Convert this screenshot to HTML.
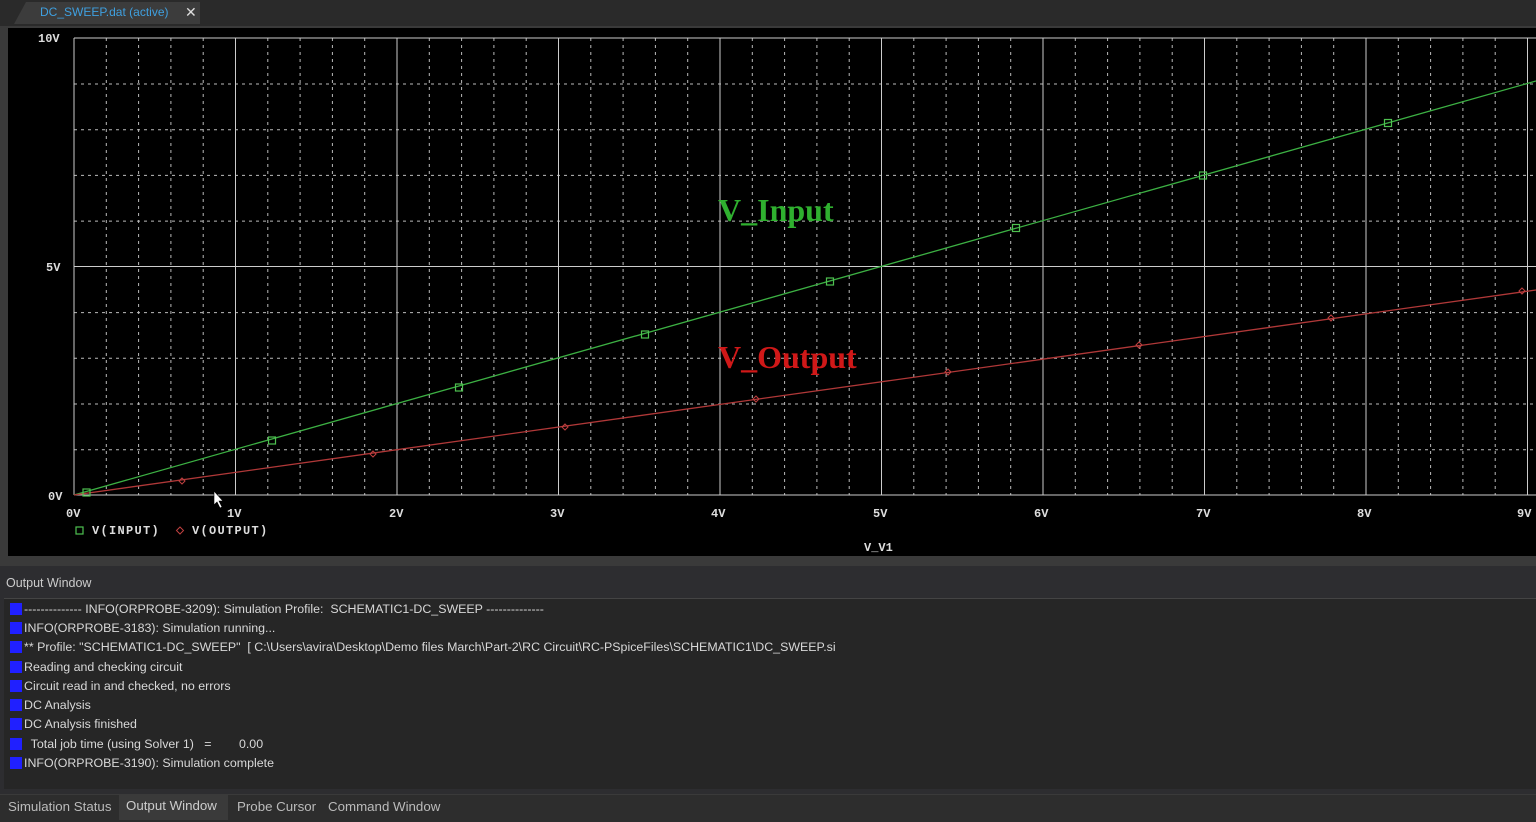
<!DOCTYPE html>
<html><head><style>
body{margin:0;width:1536px;height:821px;overflow:hidden;background:#2d2d30;font-family:"Liberation Sans",sans-serif;position:relative}
.tabbar{position:absolute;left:0;top:0;width:1536px;height:26px;background:#2a2a2a}
.tab{position:absolute;left:14px;top:2px;width:186px;height:22px;background:#3c3c3c;clip-path:polygon(12px 0,100% 0,100% 100%,0 100%)}
.tab span{position:absolute;left:26px;top:3px;font-size:12px;color:#3fa0e0}
.tab b{position:absolute;left:171px;top:2px;font-size:14px;color:#ddd;font-weight:normal}
.plotwrap{position:absolute;left:0;top:26px;width:1536px;height:540px;background:#3a3a3a}
svg{position:absolute;left:8px;top:28px}
.ow{position:absolute;left:6px;top:576px;font-size:12.5px;color:#ccc}
.list{position:absolute;left:4px;top:598px;width:1532px;height:190px;background:#262626;border-top:1px solid #444}
.row{position:absolute;left:6px;height:19px;font-size:12.4px;color:#d8d8d8;white-space:pre}
.row i{display:inline-block;width:12px;height:12px;background:#2020ff;vertical-align:-2px;margin-right:2px}
.btabs{position:absolute;left:0;top:794px;width:1536px;height:27px;background:#2d2d2d;border-top:1px solid #3a3a3a}
.bt{position:absolute;top:4px;font-size:13.3px;color:#bbb}
</style></head><body>
<div class="tabbar"><div class="tab"><span>DC_SWEEP.dat (active)</span><b>✕</b></div></div>
<div class="plotwrap"></div>
<svg width="1528" height="528" viewBox="8 28 1528 528" xmlns="http://www.w3.org/2000/svg" font-family="Liberation Mono,monospace" font-weight="bold">
<rect x="8" y="28" width="1528" height="528" fill="#000"/>
<g stroke="#bbb" stroke-width="1" stroke-dasharray="3,4">
<line x1="74" y1="84" x2="1536" y2="84"/><line x1="74" y1="129.7" x2="1536" y2="129.7"/><line x1="74" y1="175.4" x2="1536" y2="175.4"/><line x1="74" y1="221.1" x2="1536" y2="221.1"/>
<line x1="74" y1="312.6" x2="1536" y2="312.6"/><line x1="74" y1="358.3" x2="1536" y2="358.3"/><line x1="74" y1="404" x2="1536" y2="404"/><line x1="74" y1="449.7" x2="1536" y2="449.7"/>
</g>
<g id="vm" stroke="#bbb" stroke-width="1" stroke-dasharray="3,4"></g>
<g stroke="#ccc" stroke-width="1">
<line x1="74" y1="38" x2="1536" y2="38"/><line x1="74" y1="266.5" x2="1536" y2="266.5"/><line x1="74" y1="495" x2="1536" y2="495"/>
<line x1="74" y1="38" x2="74" y2="495"/>
<line x1="235.5" y1="38" x2="235.5" y2="495"/><line x1="397" y1="38" x2="397" y2="495"/><line x1="558.5" y1="38" x2="558.5" y2="495"/><line x1="720" y1="38" x2="720" y2="495"/><line x1="881.5" y1="38" x2="881.5" y2="495"/><line x1="1043" y1="38" x2="1043" y2="495"/><line x1="1204.5" y1="38" x2="1204.5" y2="495"/><line x1="1366" y1="38" x2="1366" y2="495"/><line x1="1527.5" y1="38" x2="1527.5" y2="495"/>
</g>
<line x1="74" y1="495" x2="1536" y2="81" stroke="#3cb043" stroke-width="1.3"/>
<line x1="74" y1="495" x2="1536" y2="290" stroke="#b03838" stroke-width="1.3"/>
<g fill="none" stroke="#4ec050" stroke-width="1.2">
<rect x="83" y="489" width="7" height="7"/><rect x="268.5" y="437" width="7" height="7"/><rect x="455.5" y="384" width="7" height="7"/><rect x="641.5" y="331" width="7" height="7"/><rect x="826.5" y="278" width="7" height="7"/><rect x="1012.5" y="224.5" width="7" height="7"/><rect x="1199.5" y="172" width="7" height="7"/><rect x="1384.5" y="119.5" width="7" height="7"/>
</g>
<g fill="none" stroke="#c04040" stroke-width="1">
<path d="M182 478l3 3-3 3-3-3z"/><path d="M373 451l3 3-3 3-3-3z"/><path d="M565 424l3 3-3 3-3-3z"/><path d="M756 396l3 3-3 3-3-3z"/><path d="M948 369l3 3-3 3-3-3z"/><path d="M1139 342l3 3-3 3-3-3z"/><path d="M1331 315l3 3-3 3-3-3z"/><path d="M1522 288l3 3-3 3-3-3z"/>
</g>
<g fill="#ddd" font-size="12">
<text x="38" y="42">10V</text><text x="46" y="271">5V</text><text x="48" y="500">0V</text>
<text x="66" y="517">0V</text><text x="227" y="517">1V</text><text x="389" y="517">2V</text><text x="550" y="517">3V</text><text x="711" y="517">4V</text><text x="873" y="517">5V</text><text x="1034" y="517">6V</text><text x="1196" y="517">7V</text><text x="1357" y="517">8V</text><text x="1517" y="517">9V</text>
<text x="92" y="534" letter-spacing="1.3">V(INPUT)</text><text x="192" y="534" letter-spacing="1.3">V(OUTPUT)</text>
<text x="864" y="551">V_V1</text>
</g>
<rect x="76" y="527" width="7" height="7" fill="none" stroke="#4ec050" stroke-width="1.2"/>
<path d="M180 527l3.5 3.5-3.5 3.5-3.5-3.5z" fill="none" stroke="#c04040"/>
<text x="718" y="221" font-family="Liberation Serif,serif" font-weight="bold" font-size="32" fill="#2fb02f">V_Input</text>
<text x="718" y="368" font-family="Liberation Serif,serif" font-weight="bold" font-size="32" fill="#d01818">V_Output</text>
<path d="M214 491v14l3-3 3 6 2-1-3-6h4z" fill="#fff" stroke="#000" stroke-width="0.6"/>
</svg>
<script>
var g=document.getElementById('vm'),s='';
for(var i=0;i<46;i++){if(i%5==0)continue;var x=74+i*32.3;if(x>1536)break;s+='<line x1="'+x+'" y1="38" x2="'+x+'" y2="495"/>';}
g.innerHTML=s;
</script>
<div class="ow">Output Window</div>
<div class="list">
<div class="row" style="top:3px"><i></i>-------------- INFO(ORPROBE-3209): Simulation Profile:  SCHEMATIC1-DC_SWEEP --------------</div>
<div class="row" style="top:22px"><i></i>INFO(ORPROBE-3183): Simulation running...</div>
<div class="row" style="top:41px"><i></i>** Profile: "SCHEMATIC1-DC_SWEEP"  [ C:\Users\avira\Desktop\Demo files March\Part-2\RC Circuit\RC-PSpiceFiles\SCHEMATIC1\DC_SWEEP.si</div>
<div class="row" style="top:61px"><i></i>Reading and checking circuit</div>
<div class="row" style="top:80px"><i></i>Circuit read in and checked, no errors</div>
<div class="row" style="top:99px"><i></i>DC Analysis</div>
<div class="row" style="top:118px"><i></i>DC Analysis finished</div>
<div class="row" style="top:138px"><i></i>  Total job time (using Solver 1)   =        0.00</div>
<div class="row" style="top:157px"><i></i>INFO(ORPROBE-3190): Simulation complete</div>
</div>
<div class="btabs">
<div class="bt" style="left:8px">Simulation Status</div>
<div style="position:absolute;left:119px;top:0;width:109px;height:25px;background:#3a3a3a"></div>
<div class="bt" style="left:126px;top:3px;color:#ccc">Output Window</div>
<div class="bt" style="left:237px">Probe Cursor</div>
<div class="bt" style="left:328px">Command Window</div>
</div>
</body></html>
